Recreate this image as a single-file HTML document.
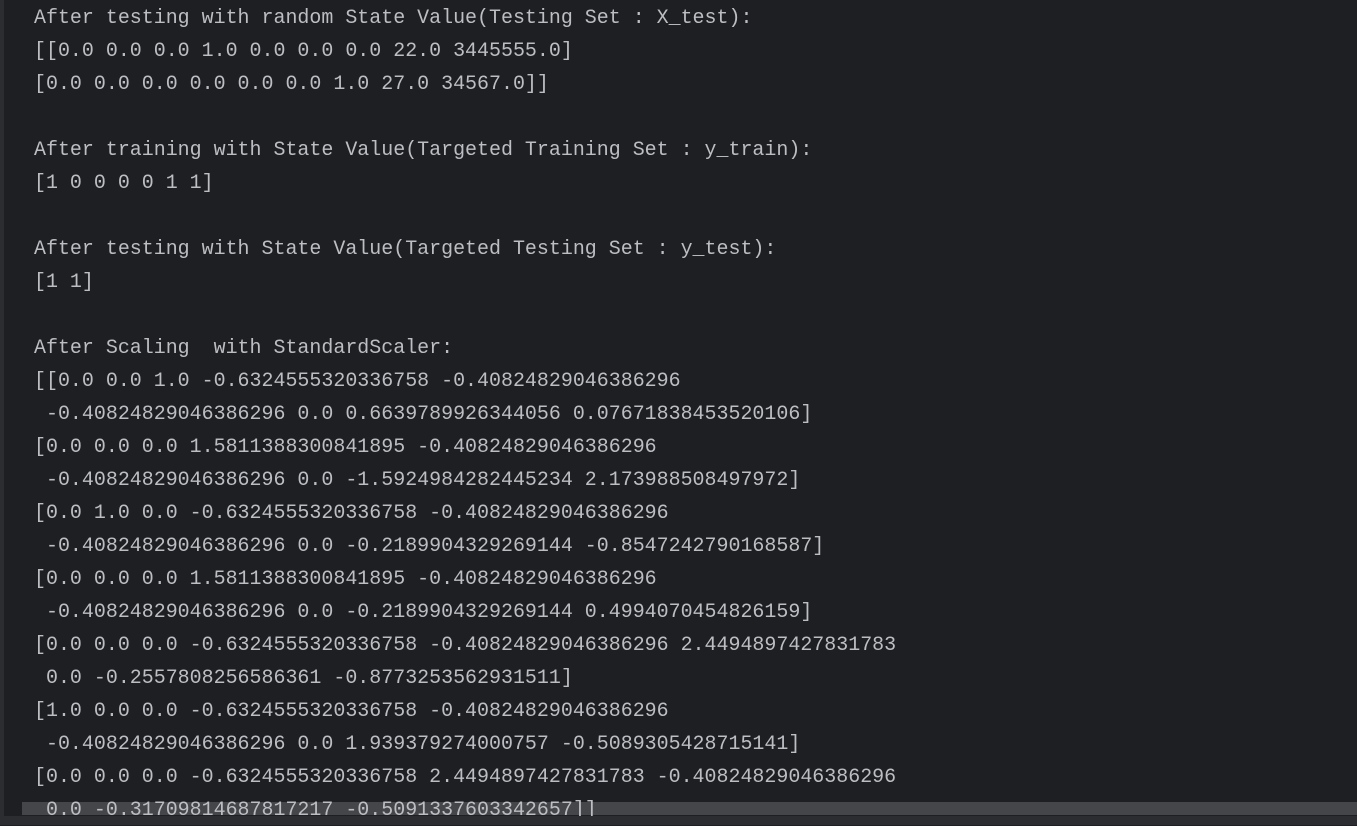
<!DOCTYPE html>
<html><head><style>
html,body{margin:0;padding:0;}
body{width:1357px;height:825px;background:#1e1f22;position:relative;overflow:hidden;}
.strip{position:absolute;left:0;top:0;width:4px;height:825px;background:#2b2d30;}
pre{position:absolute;left:34px;top:1px;margin:0;font-family:"Liberation Mono",monospace;font-size:19.97px;line-height:33px;color:#bcbec4;white-space:pre;}
.sb{position:absolute;left:22px;top:802px;width:1335px;height:13px;background:#4b4d50;opacity:.85;}
.bot{position:absolute;left:0;top:816px;width:1357px;height:9px;background:#2b2d30;}
</style></head><body>
<div class="strip"></div>
<div class="sb"></div>
<pre>After testing with random State Value(Testing Set : X_test):
[[0.0 0.0 0.0 1.0 0.0 0.0 0.0 22.0 3445555.0]
[0.0 0.0 0.0 0.0 0.0 0.0 1.0 27.0 34567.0]]

After training with State Value(Targeted Training Set : y_train):
[1 0 0 0 0 1 1]

After testing with State Value(Targeted Testing Set : y_test):
[1 1]

After Scaling  with StandardScaler:
[[0.0 0.0 1.0 -0.6324555320336758 -0.40824829046386296
 -0.40824829046386296 0.0 0.6639789926344056 0.07671838453520106]
[0.0 0.0 0.0 1.5811388300841895 -0.40824829046386296
 -0.40824829046386296 0.0 -1.5924984282445234 2.173988508497972]
[0.0 1.0 0.0 -0.6324555320336758 -0.40824829046386296
 -0.40824829046386296 0.0 -0.2189904329269144 -0.8547242790168587]
[0.0 0.0 0.0 1.5811388300841895 -0.40824829046386296
 -0.40824829046386296 0.0 -0.2189904329269144 0.4994070454826159]
[0.0 0.0 0.0 -0.6324555320336758 -0.40824829046386296 2.4494897427831783
 0.0 -0.2557808256586361 -0.8773253562931511]
[1.0 0.0 0.0 -0.6324555320336758 -0.40824829046386296
 -0.40824829046386296 0.0 1.939379274000757 -0.5089305428715141]
[0.0 0.0 0.0 -0.6324555320336758 2.4494897427831783 -0.40824829046386296
 0.0 -0.31709814687817217 -0.5091337603342657]]</pre>
<div class="bot"></div>
</body></html>
